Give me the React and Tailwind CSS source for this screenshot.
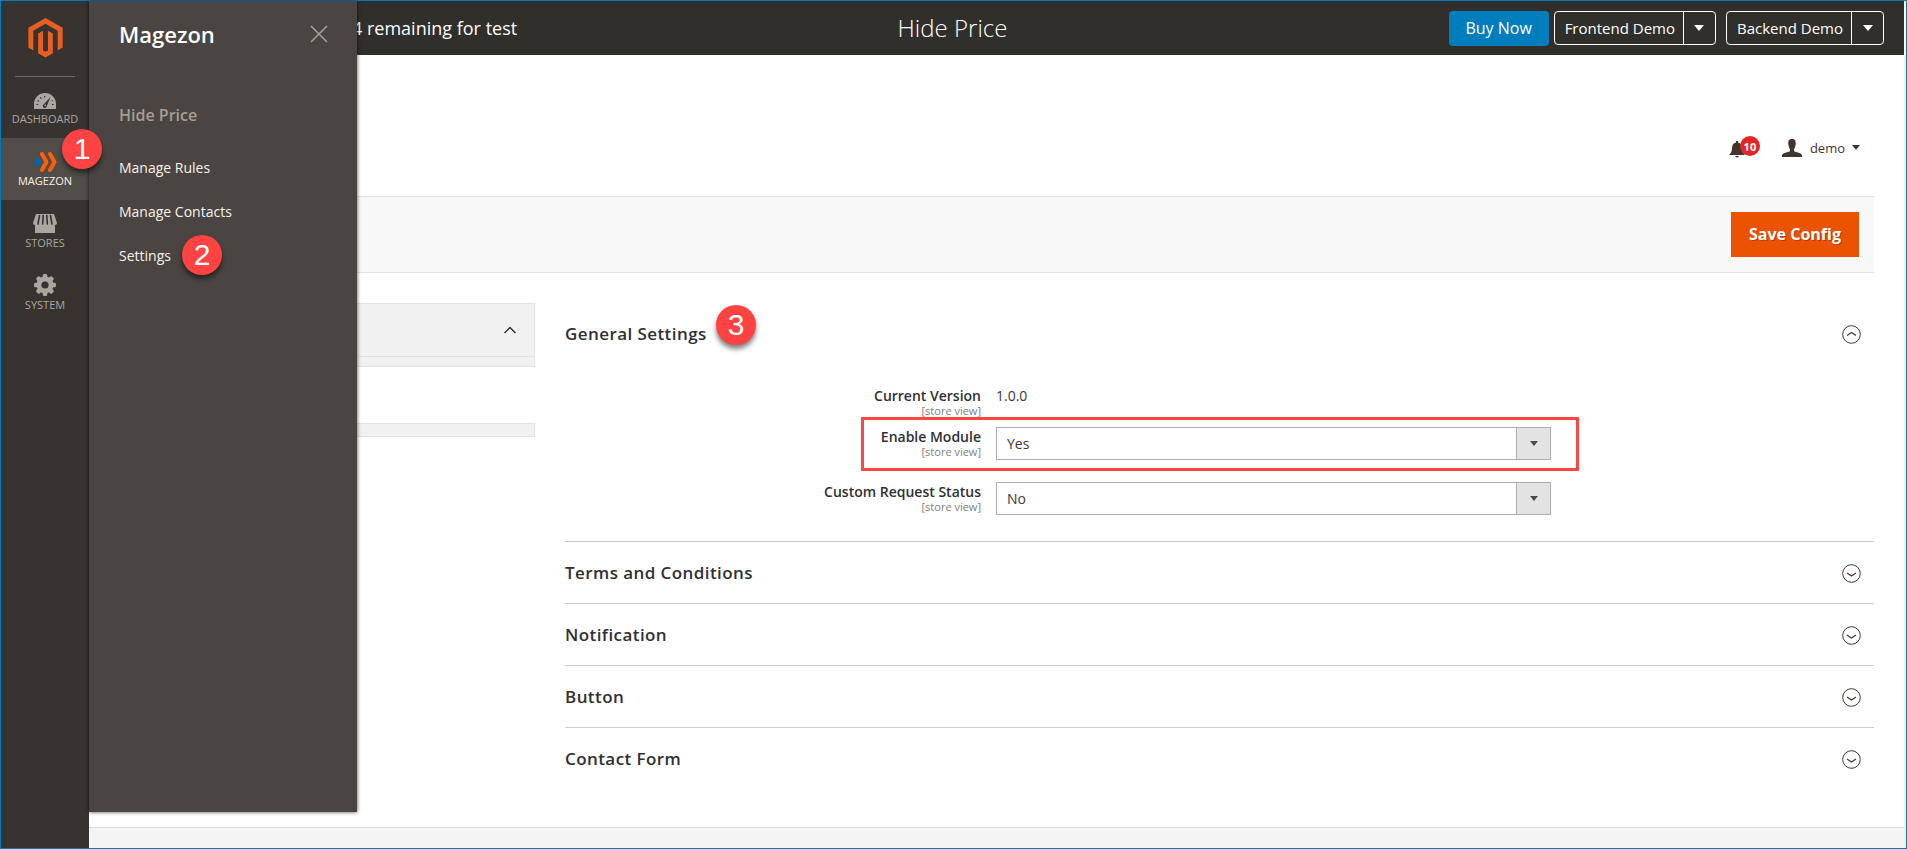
import React, { useState } from "react";

const settings = [
  { id: "enable", label: "Enable Module", value: "Yes", highlighted: true },
  { id: "request-status", label: "Custom Request Status", value: "No" },
];

const sections = ["Terms and Conditions", "Notification", "Button", "Contact Form"];

function MagentoLogo() {
  return (
    <svg width="35" height="40" viewBox="0 0 36 42" fill="#eb5e23" aria-hidden="true">
      <path d="M18 0 L36 10.3 V31 L30.8 34 V13.4 L18 6 L5.2 13.4 V34 L0 31 V10.3 Z" />
      <path d="M10.3 16.3 L15.4 13.4 V34 L18 35.5 L20.6 34 V13.4 L25.7 16.3 V37 L18 41.5 L10.3 37 Z" />
    </svg>
  );
}

function DashboardIcon() {
  return (
    <svg width="24" height="18" viewBox="0 0 24 18" aria-hidden="true">
      <path d="M1 17 V12 A11 11 0 0 1 23 12 V17 Z" fill="#aaa6a0" />
      <path
        d="M3.5 12.5 H5.2 M4.6 8.5 L6 9.4 M7.4 5.4 L8.3 6.8 M11.6 4 V5.6 M19 12.5 H20.5 M18.8 8.8 L19.6 8.4"
        stroke="#373330"
        strokeWidth="1.2"
      />
      <path d="M17.5 5 L13.8 14 A2 2 0 1 1 10.8 12.3 Z" fill="#373330" />
      <circle cx="12.2" cy="13.4" r="0.8" fill="#aaa6a0" />
    </svg>
  );
}

function MagezonIcon() {
  return (
    <svg width="24" height="20" viewBox="0 0 24 20" fill="none" aria-hidden="true">
      <path d="M5 4.5 L9 10 L5 15.5 L1 10 Z" fill="#0a64ad" />
      <path
        d="M9 2 L13.5 10 L9 18 M17 2 L21.5 10 L17 18"
        stroke="#ff5f0a"
        strokeWidth="4"
        strokeLinecap="round"
        strokeLinejoin="round"
      />
    </svg>
  );
}

function StoresIcon() {
  return (
    <svg width="24" height="20" viewBox="0 0 24 20" aria-hidden="true">
      <path d="M3 0 H21 L24 9 Q24 11 22 11 V19 H2 V11 Q0 11 0 9 Z" fill="#aaa6a0" />
      <path
        d="M6.5 1.5 L5 10 M10.2 1.5 L9.7 10 M13.8 1.5 L14.3 10 M17.5 1.5 L19 10"
        stroke="#373330"
        strokeWidth="1.6"
        strokeLinecap="round"
      />
    </svg>
  );
}

function SystemIcon() {
  return (
    <svg width="24" height="23" viewBox="0 0 24 23" aria-hidden="true">
      <g fill="#aaa6a0">
        <circle cx="12" cy="12" r="8.5" />
        {[0, 45, 90, 135].map((angle) => (
          <rect key={angle} x="9.7" y="1" width="4.6" height="22" rx="1.5" transform={`rotate(${angle} 12 12)`} />
        ))}
      </g>
      <circle cx="12" cy="12" r="3.6" fill="#373330" />
    </svg>
  );
}

function Caret({ className }) {
  return (
    <svg width="10" height="6" viewBox="0 0 10 6" className={className} aria-hidden="true">
      <path d="M0 0 H10 L5 6 Z" fill="currentColor" />
    </svg>
  );
}

function CircleChevron({ up }) {
  return (
    <svg width="19" height="19" viewBox="0 0 19 19" fill="none" stroke="#41362f" aria-hidden="true">
      <circle cx="9.5" cy="9.5" r="8.8" />
      <path d={up ? "M5 10.5 L9.5 7.5 L14 10.5" : "M5 9 L9.5 12 L14 9"} strokeWidth="1.2" />
    </svg>
  );
}

function StepBadge({ step, className }) {
  return (
    <span
      className={`absolute z-30 flex size-10 items-center justify-center rounded-full bg-[#ff4343] font-['Liberation_Sans',sans-serif] text-[30px] leading-none font-normal tracking-normal text-white shadow-[0_4px_5px_rgba(0,0,0,0.5)] ${className}`}
    >
      {step}
    </span>
  );
}

function SplitButton({ children }) {
  return (
    <div className="flex h-[34px] rounded border border-white text-white">
      <button type="button" className="pr-2 pl-[10px] text-[15px]">
        {children}
      </button>
      <button type="button" aria-label={`${children} options`} className="flex w-8 items-center justify-center border-l border-white">
        <Caret />
      </button>
    </div>
  );
}

function NavItem({ icon, label, active, children }) {
  return (
    <li className={active ? "relative bg-[#524d49]" : "relative"}>
      <a
        href="#"
        className={`flex h-[62px] flex-col items-center text-[11px] leading-4 uppercase ${
          active ? "text-[#f7f3eb]" : "text-[#aaa6a0]"
        }`}
      >
        <span className="flex h-[35px] items-end pb-px">{icon}</span>
        {label}
      </a>
      {children}
    </li>
  );
}

function SettingRow({ id, label, value, highlighted }) {
  return (
    <div className="grid grid-cols-[431fr_555fr_323fr] pb-[22px]">
      <SettingLabel htmlFor={id} label={label} />
      <div className="relative">
        <select
          id={id}
          defaultValue={value}
          className="block h-[33px] w-full appearance-none rounded-none border border-[#adadad] bg-white px-[10px] text-sm text-[#41362f]"
        >
          <option>Yes</option>
          <option>No</option>
        </select>
        <span className="pointer-events-none absolute top-0 right-0 flex h-[33px] w-[35px] items-center justify-center border border-[#adadad] bg-[#e3e3e3] text-[#514943]">
          <Caret className="h-[5px] w-2" />
        </span>
        {highlighted && (
          <span className="pointer-events-none absolute -top-[10px] -right-7 -bottom-[11px] -left-[135px] border-3 border-[#ff4545]" />
        )}
      </div>
    </div>
  );
}

function SettingLabel({ htmlFor, label }) {
  return (
    <label htmlFor={htmlFor} className="pr-[15px] text-right text-sm leading-5 font-semibold text-[#303030]">
      {label}
      <span className="block text-[11px] leading-[10px] font-normal text-[#808080]">[store view]</span>
    </label>
  );
}

export default function App() {
  const [generalOpen, setGeneralOpen] = useState(true);

  return (
    <div className="grid min-h-screen grid-cols-[88px_minmax(0,1fr)] grid-rows-[54px_1fr] border border-[#007dbd] bg-white font-['Open_Sans',sans-serif] text-[#303030]">
      <header className="col-span-2 col-start-1 row-start-1 mr-[2px] grid grid-cols-[1fr_auto_1fr] items-center bg-[#312f2b] text-white">
        <p className="pl-[351px] text-lg whitespace-nowrap">4 remaining for test</p>
        <h1 className="text-2xl font-light">Hide Price</h1>
        <div className="flex items-center justify-end pr-5">
          <button type="button" className="h-[35px] w-[100px] rounded bg-[#007dbd] text-base">
            Buy Now
          </button>
          <div className="ml-[5px] flex gap-[10px]">
            <SplitButton>Frontend Demo</SplitButton>
            <SplitButton>Backend Demo</SplitButton>
          </div>
        </div>
      </header>

      <nav className="relative z-10 col-start-1 row-span-2 row-start-1 bg-[#373330]">
        <a href="#" aria-label="Magento Admin" className="mx-[14px] flex h-[76px] justify-center border-b border-[#736963] pt-[17px]">
          <MagentoLogo />
        </a>
        <ul className="-mt-px">
          <NavItem icon={<DashboardIcon />} label="Dashboard" />
          <NavItem icon={<MagezonIcon />} label="Magezon" active>
            <StepBadge step={1} className="-top-[9px] left-[61px]" />
          </NavItem>
          <NavItem icon={<StoresIcon />} label="Stores" />
          <NavItem icon={<SystemIcon />} label="System" />
        </ul>

        <section className="absolute top-0 bottom-9 left-full w-[268px] bg-[#4a4542] px-[30px] text-white shadow-[0_0_4px_rgba(0,0,0,0.7)]">
          <div className="flex h-[66px] items-center justify-between">
            <h2 className="text-[22px] leading-8 font-semibold">Magezon</h2>
            <button type="button" aria-label="Close" className="-mr-px text-[#a79d95]">
              <svg width="18" height="18" viewBox="0 0 18 18" fill="none" stroke="currentColor" strokeWidth="1.6">
                <path d="M1 1 L17 17 M17 1 L1 17" />
              </svg>
            </button>
          </div>
          <h3 className="pt-9 text-base leading-6 font-semibold text-[#a79d95]">Hide Price</h3>
          <ul className="pt-[19px] text-sm leading-[44px] font-medium text-[#f7f3eb]">
            <li>
              <a href="#">Manage Rules</a>
            </li>
            <li>
              <a href="#">Manage Contacts</a>
            </li>
            <li className="relative">
              <a href="#">Settings</a>
              <StepBadge step={2} className="top-px left-[63px]" />
            </li>
          </ul>
        </section>
      </nav>

      <div className="col-start-2 row-start-2 flex flex-col border-r-2 border-[#f1f1f1]">
        <div className="flex h-[141px] items-end justify-end gap-[22px] pr-11 pb-10">
          <a href="#" aria-label="Notifications" className="relative block h-5 w-[31px]">
            <svg width="16" height="17" viewBox="0 0 16 17" fill="#41362f" className="mt-[5px]" aria-hidden="true">
              <path d="M7 0 H9 V1.5 C12 2 13 4.5 13 7 C13 10.5 14 12 16 14 H0 C2 12 3 10.5 3 7 C3 4.5 4 2 7 1.5 Z M6 15 H10 Q8 18 6 15 Z" />
            </svg>
            <span className="absolute top-0 right-0 flex size-5 items-center justify-center rounded-full bg-[#e22626] text-[11px] leading-none font-bold text-white">
              10
            </span>
          </a>
          <button type="button" className="flex h-5 items-center pt-[3px] text-[13px] leading-4 text-[#41362f]">
            <svg width="20" height="18" viewBox="0 0 20 18" fill="#41362f" className="mr-2" aria-hidden="true">
              <path d="M10 0 C13 0 14 2 13.7 5 C13.5 8 12.5 9 12 10 V12 C14 13.5 19 13.5 20 16 V18 H0 V16 C1 13.5 6 13.5 8 12 V10 C7.5 9 6.5 8 6.3 5 C6 2 7 0 10 0 Z" />
            </svg>
            demo
            <Caret className="ml-[7px] h-[5px] w-2" />
          </button>
        </div>

        <main className="px-[30px]">
          <div className="flex h-[77px] items-center justify-end border-y border-[#e3e3e3] bg-[#f8f8f8] pr-[15px]">
            <button
              type="button"
              className="h-[45px] w-32 bg-[#eb5202] pb-[2px] text-base font-bold text-white [text-shadow:1px_1px_0_rgba(0,0,0,0.25)]"
            >
              Save Config
            </button>
          </div>

          <div className="flex pt-[30px]">
            <aside className="w-[416px] shrink-0">
              <div className="border border-[#e3e3e3] bg-[#f1f1f1]">
                <button
                  type="button"
                  aria-label="Toggle tab group"
                  className="flex h-[53px] w-full items-center justify-end border-b border-[#e3e3e3] pr-[18px]"
                >
                  <svg width="12" height="8" viewBox="0 0 12 8" fill="none" stroke="#303030" strokeWidth="1.5" aria-hidden="true">
                    <path d="M0.5 7 L6 1.5 L11.5 7" />
                  </svg>
                </button>
                <div className="h-[9px]" />
              </div>
              <div className="mt-[56px] h-[14px] border border-[#e3e3e3] bg-[#f1f1f1]" />
            </aside>

            <div className="ml-[30px] min-w-0 flex-1">
              <section>
                <button
                  type="button"
                  aria-expanded={generalOpen}
                  onClick={() => setGeneralOpen(!generalOpen)}
                  className="flex h-[62px] w-full items-center justify-between pr-[13px] text-[17px] font-semibold tracking-wide"
                >
                  <span className="relative">
                    General Settings
                    <StepBadge step={3} className="-top-4 left-[151px]" />
                  </span>
                  <CircleChevron up={generalOpen} />
                </button>
                {generalOpen && (
                  <div className="pt-[21px] pb-1">
                    <div className="grid grid-cols-[431fr_555fr_323fr] pb-[11px]">
                      <SettingLabel label="Current Version" />
                      <p className="text-sm leading-5 text-[#41362f]">1.0.0</p>
                    </div>
                    {settings.map((setting) => (
                      <SettingRow key={setting.id} {...setting} />
                    ))}
                  </div>
                )}
              </section>
              {sections.map((title) => (
                <section key={title} className="border-t border-[#cccccc]">
                  <button
                    type="button"
                    aria-expanded="false"
                    className="flex h-[61px] w-full items-center justify-between pt-px pr-[13px] text-[17px] font-semibold tracking-wide"
                  >
                    {title}
                    <CircleChevron />
                  </button>
                </section>
              ))}
            </div>
          </div>
        </main>

        <footer className="mt-auto h-[21px] border-t border-[#dfdfdf] bg-[#f4f4f4]" />
      </div>
    </div>
  );
}
